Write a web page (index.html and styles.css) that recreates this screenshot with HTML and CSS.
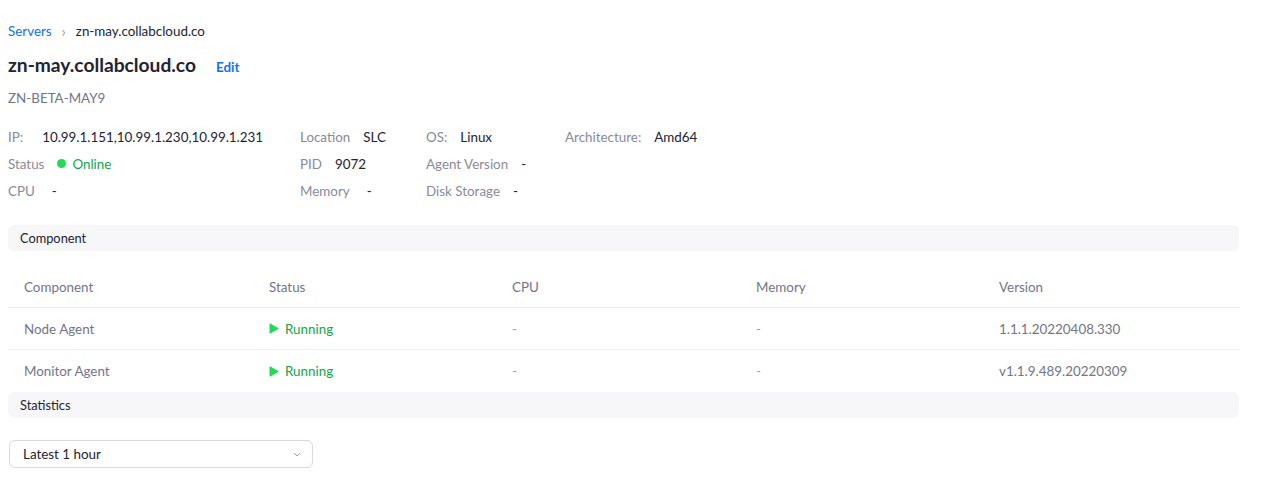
FILE: index.html
```html
<!DOCTYPE html>
<html>
<head>
    <meta charset="UTF-8">
    <link rel="stylesheet" href="styles.css">
</head>
<body>
    <!-- 面包屑 -->
    <div class="crumbs">
        <a class="crumb-link">Servers</a>
        <span class="crumb-sep">&#8250;</span>
        <span class="crumb-cur">zn-may.collabcloud.co</span>
    </div>

    <div class="title-row">
        <h1 class="title">zn-may.collabcloud.co</h1>
        <a class="edit">Edit</a>
    </div>
    <div class="subtitle">ZN-BETA-MAY9</div>

    <!-- 基本信息 -->
    <div class="info">
        <div class="item"><span class="label">IP:</span><span class="value ip">10.99.1.151,10.99.1.230,10.99.1.231</span></div>
        <div class="item"><span class="label">Location</span><span class="value">SLC</span></div>
        <div class="item"><span class="label">OS:</span><span class="value">Linux</span></div>
        <div class="item"><span class="label">Architecture:</span><span class="value">Amd64</span></div>

        <div class="item"><span class="label">Status</span><span class="value online"><i class="dot"></i>Online</span></div>
        <div class="item"><span class="label">PID</span><span class="value">9072</span></div>
        <div class="item"><span class="label">Agent Version</span><span class="value">-</span></div>
        <div class="item"></div>

        <div class="item"><span class="label">CPU</span><span class="value dash">-</span></div>
        <div class="item"><span class="label">Memory</span><span class="value dash">-</span></div>
        <div class="item"><span class="label">Disk Storage</span><span class="value">-</span></div>
        <div class="item"></div>
    </div>

    <div class="section">Component</div>

    <div class="table">
        <div class="tr head">
            <div class="td">Component</div>
            <div class="td">Status</div>
            <div class="td">CPU</div>
            <div class="td">Memory</div>
            <div class="td">Version</div>
        </div>
        <div class="tr">
            <div class="td">Node Agent</div>
            <div class="td running"><svg width="10" height="11" viewBox="0 0 10 11"><path d="M1 0.8 L9.2 5.5 L1 10.2 Z" fill="#23d959" stroke="#23d959" stroke-width="1" stroke-linejoin="round"/></svg>Running</div>
            <div class="td muted">-</div>
            <div class="td muted">-</div>
            <div class="td">1.1.1.20220408.330</div>
        </div>
        <div class="tr">
            <div class="td">Monitor Agent</div>
            <div class="td running"><svg width="10" height="11" viewBox="0 0 10 11"><path d="M1 0.8 L9.2 5.5 L1 10.2 Z" fill="#23d959" stroke="#23d959" stroke-width="1" stroke-linejoin="round"/></svg>Running</div>
            <div class="td muted">-</div>
            <div class="td muted">-</div>
            <div class="td">v1.1.9.489.20220309</div>
        </div>
    </div>

    <div class="section">Statistics</div>

    <div class="select">
        <span>Latest 1 hour</span>
        <svg width="8" height="5" viewBox="0 0 8 5"><path d="M1 1 L4 4 L7 1" fill="none" stroke="#a0a0ae" stroke-width="1"/></svg>
    </div>
</body>
</html>
```

FILE: styles.css
```css
body {
    margin: 0;
    padding: 0 41px 0 8px;
    font-family: 'Lato', 'Liberation Sans', sans-serif;
    font-size: 13.4px;
    color: #232333;
    background: #fff;
}
.crumbs {
    display: flex;
    align-items: center;
    gap: 10px;
    font-size: 13.4px;
    padding-top: 22px;
    height: 18px;
}
.crumb-link {
    color: #0e72ed;
}
.crumb-sep {
    color: #9a9aa8;
    font-size: 15px;
}
.crumb-cur {
    color: #232333;
}
.title-row {
    display: flex;
    align-items: baseline;
    gap: 20px;
    margin-top: 13px;
}
.title {
    margin: 0;
    font-size: 19.2px;
    font-weight: bold;
    line-height: 24px;
}
.edit {
    color: #0e72ed;
    font-size: 13.4px;
    font-weight: bold;
}
.subtitle {
    margin-top: 13px;
    font-size: 13.4px;
    color: #747487;
}
.info {
    display: grid;
    grid-template-columns: 292px 126px 139px auto;
    grid-auto-rows: 27px;
    margin-top: 17px;
    align-items: center;
}
.item {
    display: flex;
    align-items: center;
    gap: 13px;
}
.label {
    color: #8a8a9a;
}
.value {
    color: #232333;
}
.value.ip {
    margin-left: 6px;
}
.value.dash {
    margin-left: 4px;
}
.online {
    color: #0fa64a;
    display: flex;
    align-items: center;
    gap: 6px;
}
.dot {
    width: 9px;
    height: 9px;
    border-radius: 50%;
    background: #23d959;
}
.section {
    margin-top: 21px;
    height: 26px;
    line-height: 26px;
    padding-left: 12px;
    background: #f7f7fa;
    border-radius: 6px;
    font-size: 12.8px;
    color: #232333;
}
.table {
    margin-top: 15px;
}
.tr {
    display: grid;
    grid-template-columns: 245px 243px 244px 243px 1fr;
    height: 42px;
    box-sizing: border-box;
    align-items: center;
    border-bottom: 1px solid #ededf2;
}
.tr:last-child {
    border-bottom: none;
}
.td {
    padding-left: 16px;
    color: #747487;
}
.running {
    display: flex;
    align-items: center;
    gap: 6px;
    color: #0fa64a;
}
.muted {
    color: #a0a0ae;
}
.table + .section {
    margin-top: 0;
}
.select {
    margin-top: 22px;
    margin-left: 1px;
    width: 304px;
    height: 28px;
    box-sizing: border-box;
    border: 1px solid #d8d8e2;
    border-radius: 6px;
    display: flex;
    align-items: center;
    justify-content: space-between;
    padding: 0 11px 0 13px;
    color: #232333;
}
```
